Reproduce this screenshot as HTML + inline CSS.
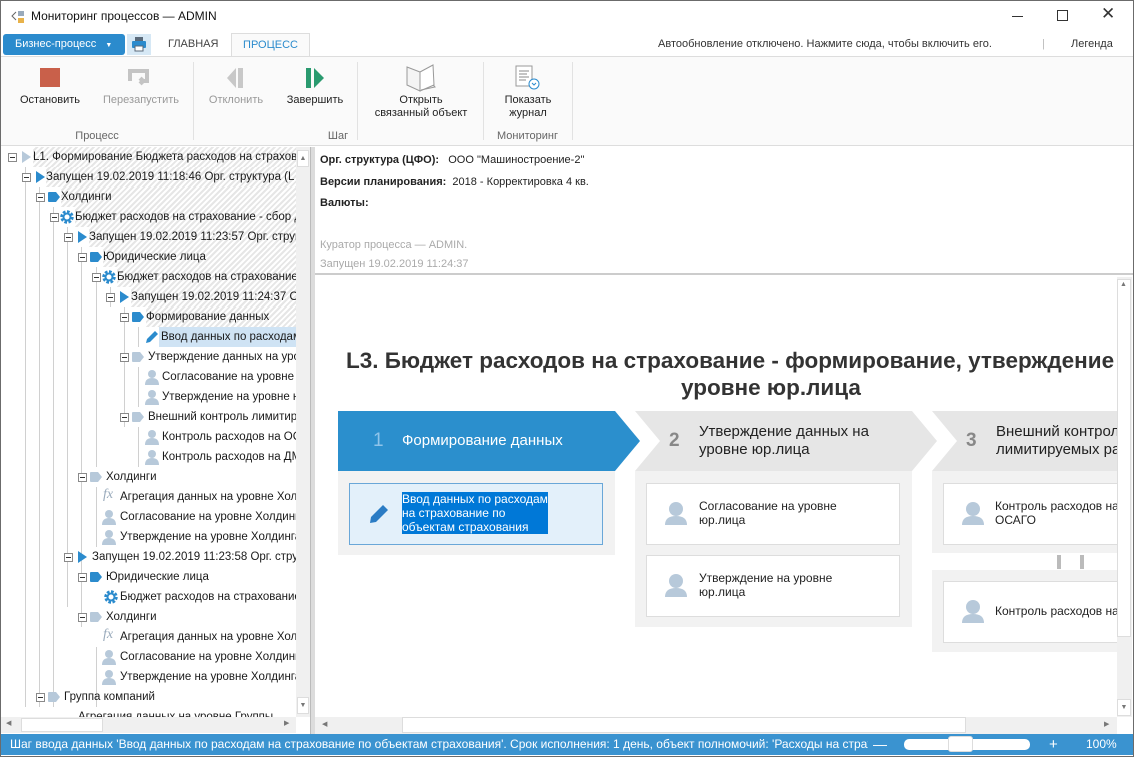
<!DOCTYPE html>
<html><head><meta charset="utf-8"><style>
*{box-sizing:border-box;margin:0;padding:0}
body{width:1134px;height:757px;overflow:hidden;background:#fff;font-family:"Liberation Sans",sans-serif;font-size:11px;color:#222;position:relative}
.a{position:absolute}
.win{position:absolute;left:0;top:0;width:1134px;height:757px;border:1px solid #6b6b6b}
.r{position:absolute;height:20px;line-height:20px;white-space:nowrap;font-size:11.5px;color:#1a1a1a}
.ex{position:absolute;width:9px;height:9px;border:1px solid #8a8a8a;background:#fff}
.ex:after{content:"";position:absolute;left:1px;top:3px;width:5px;height:1px;background:#333}
.hat{background:repeating-linear-gradient(135deg,#fff 0 2px,#e6e6e6 2px 4px)}
.lbl{position:absolute;text-align:center;font-size:11px;color:#222;line-height:13px}
.gl{position:absolute;font-size:11px;color:#666;text-align:center}
.sep{position:absolute;top:62px;width:1px;height:78px;background:#e2e2e2}
.card{position:absolute;background:#fff;border:1px solid #ddd;font-size:12px;line-height:14px;color:#111}
.vl{position:absolute;width:1px;background:#d0d0d0}
</style></head><body>
<div class="win"></div>
<svg class="a" style="left:10px;top:9px" width="16" height="16"><path d="M6 3 L2 7 L6 11" stroke="#666" fill="none"/><rect x="8" y="2" width="6" height="5" fill="#9ab"/><rect x="8" y="9" width="6" height="5" fill="#e8b24a"/></svg>
<div class="a" style="left:31px;top:9px;font-size:12px;color:#111">Мониторинг процессов — ADMIN</div>
<div class="a" style="left:1012px;top:16px;width:11px;height:1px;background:#333"></div>
<div class="a" style="left:1057px;top:10px;width:11px;height:11px;border:1px solid #333"></div>
<div class="a" style="left:1101px;top:4px;font-size:17px;color:#333">✕</div>
<div class="a" style="left:3px;top:34px;width:122px;height:21px;background:#2b8bcd;border-radius:3px;color:#fff;font-size:11px;line-height:21px;padding-left:12px">Бизнес-процесс&nbsp;&nbsp;&nbsp;<span style="font-size:7px">▼</span></div>
<div class="a" style="left:127px;top:34px;width:24px;height:21px;background:#d6e8f5"></div>
<svg class="a" style="left:131px;top:36px" width="16" height="16"><rect x="4" y="1" width="8" height="4" fill="#5a6a7a"/><rect x="1" y="5" width="14" height="7" rx="1" fill="#2b8bcd"/><rect x="4" y="10" width="8" height="5" fill="#fff" stroke="#5a6a7a"/></svg>
<div class="a" style="left:168px;top:38px;font-size:11px;color:#444">ГЛАВНАЯ</div>
<div class="a" style="left:231px;top:33px;width:79px;height:24px;background:#fafafa;border:1px solid #ddd;border-bottom:none;color:#2b8bcd;font-size:11px;text-align:center;line-height:22px">ПРОЦЕСС</div>
<div class="a" style="left:658px;top:38px;font-size:11px;color:#333">Автообновление отключено. Нажмите сюда, чтобы включить его.</div>
<div class="a" style="left:1042px;top:38px;color:#bbb">|</div>
<div class="a" style="left:1071px;top:38px;font-size:11px;color:#333">Легенда</div>
<div class="a" style="left:1px;top:56px;width:1132px;height:90px;background:#fafafa;border-top:1px solid #ddd;border-bottom:1px solid #ddd"></div>
<div class="a" style="left:40px;top:68px;width:20px;height:19px;background:#c9604a"></div>
<svg class="a" style="left:126px;top:67px" width="26" height="22"><path d="M4 14 V4 H21 V14 H14 M14 14 L17 11 M14 14 L17 17" stroke="#c4c4c4" stroke-width="4" fill="none"/></svg>
<div class="lbl" style="left:10px;top:94px;width:80px">Остановить</div>
<div class="lbl" style="left:96px;top:94px;width:90px;color:#999">Перезапустить</div>
<svg class="a" style="left:226px;top:67px" width="20" height="22"><path d="M10 1 L1 11 L10 21Z" fill="#c8c8c8"/><rect x="12" y="1" width="5" height="20" fill="#c8c8c8"/></svg>
<svg class="a" style="left:306px;top:67px" width="20" height="22"><rect x="0" y="1" width="5" height="20" fill="#2a9a6f"/><path d="M8 1 L18 11 L8 21Z" fill="#2a9a6f"/></svg>
<div class="lbl" style="left:198px;top:94px;width:76px;color:#999">Отклонить</div>
<div class="lbl" style="left:278px;top:94px;width:74px">Завершить</div>
<svg class="a" style="left:404px;top:63px" width="34" height="30"><path d="M3 4 L16 9 L16 28 L3 22Z" fill="#f4f4f4" stroke="#999"/><path d="M16 9 L29 2 L30 22 L16 28Z" fill="#fff" stroke="#999"/><path d="M17 27 L31 24 L29 22" fill="none" stroke="#999"/></svg>
<div class="lbl" style="left:362px;top:94px;width:118px">Открыть<br>связанный объект</div>
<svg class="a" style="left:514px;top:65px" width="28" height="26"><rect x="2" y="1" width="16" height="20" fill="#fff" stroke="#999"/><path d="M5 6h10M5 9h8M5 12h10M5 15h7" stroke="#888"/><circle cx="20" cy="19" r="5" fill="#fff" stroke="#2b8bcd"/><path d="M18 18 L20 20 L22 18" stroke="#2b8bcd" fill="none"/></svg>
<div class="lbl" style="left:488px;top:94px;width:80px">Показать<br>журнал</div>
<div class="sep" style="left:193px"></div><div class="sep" style="left:357px"></div><div class="sep" style="left:483px"></div><div class="sep" style="left:572px"></div>
<div class="gl" style="left:1px;top:130px;width:192px">Процесс</div>
<div class="gl" style="left:193px;top:130px;width:290px">Шаг</div>
<div class="gl" style="left:483px;top:130px;width:89px">Мониторинг</div>

<div class="a" style="left:1px;top:147px;width:310px;height:587px;background:#fff"></div>
<div class="a" style="left:310px;top:147px;width:5px;height:588px;background:#dcdcdc;border-left:1px solid #bbb"></div>
<div class="a" style="left:1px;top:147px;width:295px;height:570px;overflow:hidden">
<div class="vl" style="left:24px;top:20px;height:540px"></div>
<div class="vl" style="left:38px;top:40px;height:520px"></div>
<div class="vl" style="left:52px;top:60px;height:500px"></div>
<div class="vl" style="left:66px;top:80px;height:380px"></div>
<div class="vl" style="left:80px;top:100px;height:360px"></div>
<div class="vl" style="left:95px;top:120px;height:200px"></div>
<div class="vl" style="left:109px;top:140px;height:20px"></div>
<div class="vl" style="left:123px;top:160px;height:120px"></div>
<div class="vl" style="left:137px;top:180px;height:20px"></div>
<div class="vl" style="left:137px;top:220px;height:40px"></div>
<div class="vl" style="left:137px;top:280px;height:40px"></div>
<div class="vl" style="left:95px;top:340px;height:60px"></div>
<div class="vl" style="left:80px;top:420px;height:60px"></div>
<div class="vl" style="left:95px;top:500px;height:60px"></div>
</div>
<div class="a" style="left:1px;top:147px;width:295px;height:570px;overflow:hidden">
<div class="r hat" style="left:32px;top:0;width:270px">L1. Формирование Бюджета расходов на страхование</div>
<div class="ex" style="left:7px;top:6px"></div><svg class="a" style="left:19px;top:3px" width="12" height="14"><path d="M2 1 L11 7 L2 13Z" fill="#b7c9da"/></svg>
<div class="r hat" style="left:45px;top:20px;width:260px">Запущен 19.02.2019 11:18:46 Орг. структура (L</div>
<div class="ex" style="left:21px;top:26px"></div><svg class="a" style="left:33px;top:23px" width="12" height="14"><path d="M2 1 L11 7 L2 13Z" fill="#2b8bcd"/></svg>
<div class="r hat" style="left:60px;top:40px;width:250px">Холдинги</div>
<div class="ex" style="left:35px;top:46px"></div><svg class="a" style="left:47px;top:45px" width="13" height="10"><path d="M0 1 Q0 0 1 0 H8 L12 5 L8 10 H1 Q0 10 0 9Z" fill="#2b8bcd"/></svg>
<div class="r hat" style="left:74px;top:60px;width:230px">Бюджет расходов на страхование - сбор д</div>
<div class="ex" style="left:49px;top:66px"></div><svg class="a" style="left:58px;top:62px" width="16" height="16"><circle cx="8" cy="8" r="5" fill="none" stroke="#2b8bcd" stroke-width="3.5" stroke-dasharray="2.5 1.4"/><circle cx="8" cy="8" r="3.5" fill="none" stroke="#2b8bcd" stroke-width="2"/></svg>
<div class="r hat" style="left:88px;top:80px;width:220px">Запущен 19.02.2019 11:23:57 Орг. структ</div>
<div class="ex" style="left:63px;top:86px"></div><svg class="a" style="left:75px;top:83px" width="12" height="14"><path d="M2 1 L11 7 L2 13Z" fill="#2b8bcd"/></svg>
<div class="r hat" style="left:102px;top:100px;width:200px">Юридические лица</div>
<div class="ex" style="left:77px;top:106px"></div><svg class="a" style="left:89px;top:105px" width="13" height="10"><path d="M0 1 Q0 0 1 0 H8 L12 5 L8 10 H1 Q0 10 0 9Z" fill="#2b8bcd"/></svg>
<div class="r hat" style="left:116px;top:120px;width:190px">Бюджет расходов на страхование</div>
<div class="ex" style="left:91px;top:126px"></div><svg class="a" style="left:100px;top:122px" width="16" height="16"><circle cx="8" cy="8" r="5" fill="none" stroke="#2b8bcd" stroke-width="3.5" stroke-dasharray="2.5 1.4"/><circle cx="8" cy="8" r="3.5" fill="none" stroke="#2b8bcd" stroke-width="2"/></svg>
<div class="r hat" style="left:130px;top:140px;width:170px">Запущен 19.02.2019 11:24:37 О</div>
<div class="ex" style="left:105px;top:146px"></div><svg class="a" style="left:117px;top:143px" width="12" height="14"><path d="M2 1 L11 7 L2 13Z" fill="#2b8bcd"/></svg>
<div class="r hat" style="left:145px;top:160px;width:160px">Формирование данных</div>
<div class="ex" style="left:119px;top:166px"></div><svg class="a" style="left:131px;top:165px" width="13" height="10"><path d="M0 1 Q0 0 1 0 H8 L12 5 L8 10 H1 Q0 10 0 9Z" fill="#2b8bcd"/></svg>
<div class="r" style="left:158px;top:180px;width:140px;background:#cfe3f4;padding-left:2px">Ввод данных по расходам</div>
<svg class="a" style="left:143px;top:183px" width="15" height="15"><path d="M2 13 L3 9 L11 1 L14 4 L6 12Z" fill="#2b8bcd"/></svg>
<div class="r" style="left:147px;top:200px">Утверждение данных на уро</div>
<div class="ex" style="left:119px;top:206px"></div><svg class="a" style="left:131px;top:205px" width="13" height="10"><path d="M0 1 Q0 0 1 0 H8 L12 5 L8 10 H1 Q0 10 0 9Z" fill="#b7c9da"/></svg>
<div class="r" style="left:161px;top:220px">Согласование на уровне ю</div>
<svg class="a" style="left:144px;top:222px" width="14" height="16"><circle cx="7" cy="5" r="4" fill="#b7c9da"/><path d="M0 16 Q0 9 7 9 Q14 9 14 16Z" fill="#b7c9da"/></svg>
<div class="r" style="left:161px;top:240px">Утверждение на уровне ю</div>
<svg class="a" style="left:144px;top:242px" width="14" height="16"><circle cx="7" cy="5" r="4" fill="#b7c9da"/><path d="M0 16 Q0 9 7 9 Q14 9 14 16Z" fill="#b7c9da"/></svg>
<div class="r" style="left:147px;top:260px">Внешний контроль лимитиру</div>
<div class="ex" style="left:119px;top:266px"></div><svg class="a" style="left:131px;top:265px" width="13" height="10"><path d="M0 1 Q0 0 1 0 H8 L12 5 L8 10 H1 Q0 10 0 9Z" fill="#b7c9da"/></svg>
<div class="r" style="left:161px;top:280px">Контроль расходов на ОС</div>
<svg class="a" style="left:144px;top:282px" width="14" height="16"><circle cx="7" cy="5" r="4" fill="#b7c9da"/><path d="M0 16 Q0 9 7 9 Q14 9 14 16Z" fill="#b7c9da"/></svg>
<div class="r" style="left:161px;top:300px">Контроль расходов на ДМ</div>
<svg class="a" style="left:144px;top:302px" width="14" height="16"><circle cx="7" cy="5" r="4" fill="#b7c9da"/><path d="M0 16 Q0 9 7 9 Q14 9 14 16Z" fill="#b7c9da"/></svg>
<div class="r" style="left:105px;top:320px">Холдинги</div>
<div class="ex" style="left:77px;top:326px"></div><svg class="a" style="left:89px;top:325px" width="13" height="10"><path d="M0 1 Q0 0 1 0 H8 L12 5 L8 10 H1 Q0 10 0 9Z" fill="#b7c9da"/></svg>
<div class="r" style="left:119px;top:340px">Агрегация данных на уровне Холд</div>
<div class="a" style="left:102px;top:340px;font-family:'Liberation Serif',serif;font-style:italic;color:#9ab;font-size:14px">fx</div>
<div class="r" style="left:119px;top:360px">Согласование на уровне Холдинга</div>
<svg class="a" style="left:101px;top:362px" width="14" height="16"><circle cx="7" cy="5" r="4" fill="#b7c9da"/><path d="M0 16 Q0 9 7 9 Q14 9 14 16Z" fill="#b7c9da"/></svg>
<div class="r" style="left:119px;top:380px">Утверждение на уровне Холдинга</div>
<svg class="a" style="left:101px;top:382px" width="14" height="16"><circle cx="7" cy="5" r="4" fill="#b7c9da"/><path d="M0 16 Q0 9 7 9 Q14 9 14 16Z" fill="#b7c9da"/></svg>
<div class="r" style="left:91px;top:400px">Запущен 19.02.2019 11:23:58 Орг. структ</div>
<div class="ex" style="left:63px;top:406px"></div><svg class="a" style="left:75px;top:403px" width="12" height="14"><path d="M2 1 L11 7 L2 13Z" fill="#2b8bcd"/></svg>
<div class="r" style="left:105px;top:420px">Юридические лица</div>
<div class="ex" style="left:77px;top:426px"></div><svg class="a" style="left:89px;top:425px" width="13" height="10"><path d="M0 1 Q0 0 1 0 H8 L12 5 L8 10 H1 Q0 10 0 9Z" fill="#2b8bcd"/></svg>
<div class="r" style="left:119px;top:440px">Бюджет расходов на страхование</div>
<svg class="a" style="left:102px;top:442px" width="16" height="16"><circle cx="8" cy="8" r="5" fill="none" stroke="#2b8bcd" stroke-width="3.5" stroke-dasharray="2.5 1.4"/><circle cx="8" cy="8" r="3.5" fill="none" stroke="#2b8bcd" stroke-width="2"/></svg>
<div class="r" style="left:105px;top:460px">Холдинги</div>
<div class="ex" style="left:77px;top:466px"></div><svg class="a" style="left:89px;top:465px" width="13" height="10"><path d="M0 1 Q0 0 1 0 H8 L12 5 L8 10 H1 Q0 10 0 9Z" fill="#b7c9da"/></svg>
<div class="r" style="left:119px;top:480px">Агрегация данных на уровне Холд</div>
<div class="a" style="left:102px;top:480px;font-family:'Liberation Serif',serif;font-style:italic;color:#9ab;font-size:14px">fx</div>
<div class="r" style="left:119px;top:500px">Согласование на уровне Холдинга</div>
<svg class="a" style="left:101px;top:502px" width="14" height="16"><circle cx="7" cy="5" r="4" fill="#b7c9da"/><path d="M0 16 Q0 9 7 9 Q14 9 14 16Z" fill="#b7c9da"/></svg>
<div class="r" style="left:119px;top:520px">Утверждение на уровне Холдинга</div>
<svg class="a" style="left:101px;top:522px" width="14" height="16"><circle cx="7" cy="5" r="4" fill="#b7c9da"/><path d="M0 16 Q0 9 7 9 Q14 9 14 16Z" fill="#b7c9da"/></svg>
<div class="r" style="left:63px;top:540px">Группа компаний</div>
<div class="ex" style="left:35px;top:546px"></div><svg class="a" style="left:47px;top:545px" width="13" height="10"><path d="M0 1 Q0 0 1 0 H8 L12 5 L8 10 H1 Q0 10 0 9Z" fill="#b7c9da"/></svg>
<div class="r" style="left:77px;top:560px">Агрегация данных на уровне Группы</div>
</div>
<div class="a" style="left:296px;top:147px;width:14px;height:570px;background:#f0f0f0"></div>
<div class="a" style="left:297px;top:150px;width:12px;height:17px;background:#fff;border:1px solid #ddd;font-size:7px;color:#777;text-align:center;line-height:15px">▲</div>
<div class="a" style="left:297px;top:697px;width:12px;height:17px;background:#fff;border:1px solid #ddd;font-size:7px;color:#777;text-align:center;line-height:15px">▼</div>
<div class="a" style="left:1px;top:717px;width:295px;height:16px;background:#f0f0f0"></div>
<div class="a" style="left:21px;top:718px;width:82px;height:14px;background:#fff;border:1px solid #ddd"></div>
<div class="a" style="left:6px;top:719px;font-size:7px;color:#777">◀</div>
<div class="a" style="left:284px;top:719px;font-size:7px;color:#777">▶</div>

<div class="a" style="left:315px;top:147px;width:818px;height:128px;background:#fff;border-bottom:2px solid #ccc"></div>
<div class="a" style="left:320px;top:154px;font-size:11px"><b>Орг. структура (ЦФО):</b>&nbsp;&nbsp;&nbsp;ООО "Машиностроение-2"</div>
<div class="a" style="left:320px;top:176px;font-size:11px"><b>Версии планирования:</b>&nbsp;&nbsp;2018 - Корректировка 4 кв.</div>
<div class="a" style="left:320px;top:197px;font-size:11px"><b>Валюты:</b></div>
<div class="a" style="left:320px;top:239px;font-size:11px;color:#aaa">Куратор процесса — ADMIN.</div>
<div class="a" style="left:320px;top:258px;font-size:11px;color:#aaa">Запущен 19.02.2019 11:24:37</div>

<div class="a" style="left:315px;top:277px;width:802px;height:440px;overflow:hidden;background:#fff">
<div class="a" style="left:31px;top:71px;white-space:nowrap;font-size:22.5px;font-weight:bold;color:#333">L3. Бюджет расходов на страхование - формирование, утверждение данных на</div>
<div class="a" style="left:366px;top:98px;white-space:nowrap;font-size:22.5px;font-weight:bold;color:#333">уровне юр.лица</div>
<svg class="a" style="left:0;top:0" width="802" height="440">
<path d="M23 134 H300 L325 164 L300 194 H23Z" fill="#2b8fcd"/>
<path d="M320 134 H597 L622 164 L597 194 H320 L345 164Z" fill="#e6e6e6"/>
<path d="M617 134 H802 V194 H617 L642 164Z" fill="#e6e6e6"/>
<rect x="23" y="194" width="277" height="84" fill="#f2f2f2"/>
<rect x="320" y="194" width="277" height="156" fill="#f2f2f2"/>
<rect x="617" y="194" width="185" height="82" fill="#f2f2f2"/>
<rect x="617" y="293" width="185" height="82" fill="#f2f2f2"/>
<rect x="742" y="278" width="4" height="14" fill="#bbb"/><rect x="765" y="278" width="4" height="14" fill="#bbb"/>
</svg>
<div class="a" style="left:58px;top:153px;font-size:19px;color:#8fc4ea">1</div>
<div class="a" style="left:87px;top:155px;font-size:15px;color:#fff">Формирование данных</div>
<div class="a" style="left:354px;top:153px;font-size:19px;color:#888;font-weight:bold">2</div>
<div class="a" style="left:384px;top:146px;font-size:15px;color:#222;line-height:18px">Утверждение данных на<br>уровне юр.лица</div>
<div class="a" style="left:651px;top:153px;font-size:19px;color:#888;font-weight:bold">3</div>
<div class="a" style="left:681px;top:146px;font-size:15px;color:#222;line-height:18px;white-space:nowrap">Внешний контроль<br>лимитируемых расходов</div>
<div class="card" style="left:34px;top:206px;width:254px;height:62px;background:#e3f0fa;border-color:#6aa7d8"></div>
<svg class="a" style="left:53px;top:226px" width="22" height="22"><path d="M2 20 L3 14 L15 2 L20 7 L8 19Z" fill="#2b7cc4"/></svg>
<div class="a" style="left:87px;top:215px;width:146px;height:42px;background:#0078d7;color:#fff;font-size:12px;line-height:14px">Ввод данных по расходам<br>на страхование по<br>объектам страхования</div>
<div class="card" style="left:331px;top:206px;width:254px;height:62px"></div>
<div class="card" style="left:331px;top:278px;width:254px;height:62px"></div>
<div class="card" style="left:628px;top:206px;width:190px;height:62px"></div>
<div class="card" style="left:628px;top:304px;width:190px;height:62px"></div>
<svg class="a" style="left:350px;top:224px" width="22" height="24"><circle cx="11" cy="8" r="7" fill="#b7c9da"/><path d="M0 24 Q0 15 11 15 Q22 15 22 24Z" fill="#b7c9da"/></svg>
<svg class="a" style="left:350px;top:296px" width="22" height="24"><circle cx="11" cy="8" r="7" fill="#b7c9da"/><path d="M0 24 Q0 15 11 15 Q22 15 22 24Z" fill="#b7c9da"/></svg>
<svg class="a" style="left:647px;top:224px" width="22" height="24"><circle cx="11" cy="8" r="7" fill="#b7c9da"/><path d="M0 24 Q0 15 11 15 Q22 15 22 24Z" fill="#b7c9da"/></svg>
<svg class="a" style="left:647px;top:322px" width="22" height="24"><circle cx="11" cy="8" r="7" fill="#b7c9da"/><path d="M0 24 Q0 15 11 15 Q22 15 22 24Z" fill="#b7c9da"/></svg>
<div class="a" style="left:384px;top:222px;font-size:12px;line-height:14px">Согласование на уровне<br>юр.лица</div>
<div class="a" style="left:384px;top:294px;font-size:12px;line-height:14px">Утверждение на уровне<br>юр.лица</div>
<div class="a" style="left:680px;top:222px;font-size:12px;line-height:14px;white-space:nowrap">Контроль расходов на<br>ОСАГО</div>
<div class="a" style="left:680px;top:327px;font-size:12px;line-height:14px;white-space:nowrap">Контроль расходов на</div>
</div>
<div class="a" style="left:1117px;top:277px;width:15px;height:440px;background:#f0f0f0"></div>
<div class="a" style="left:1117px;top:279px;width:14px;height:358px;background:#fff;border:1px solid #ddd"></div>
<div class="a" style="left:1120px;top:281px;font-size:7px;color:#777">▲</div>
<div class="a" style="left:1117px;top:699px;width:14px;height:17px;background:#fff;border:1px solid #ddd;font-size:7px;color:#777;text-align:center;line-height:15px">▼</div>
<div class="a" style="left:315px;top:717px;width:802px;height:17px;background:#f0f0f0"></div>
<div class="a" style="left:402px;top:717px;width:564px;height:16px;background:#fff;border:1px solid #ddd"></div>
<div class="a" style="left:322px;top:720px;font-size:7px;color:#777">◀</div>
<div class="a" style="left:1104px;top:720px;font-size:7px;color:#777">▶</div>
<div class="a" style="left:1px;top:734px;width:1132px;height:21px;background:#3a93d0;color:#fff;font-size:12px;line-height:21px;white-space:nowrap;overflow:hidden">
<span style="position:absolute;left:9px;width:858px;overflow:hidden">Шаг ввода данных 'Ввод данных по расходам на страхование по объектам страхования'. Срок исполнения: 1 день, объект полномочий: 'Расходы на страхование'</span>
<span style="position:absolute;left:872px;font-size:14px">—</span>
<span style="position:absolute;left:903px;top:5px;width:126px;height:11px;background:#fff;border-radius:5px"></span>
<span style="position:absolute;left:947px;top:2px;width:25px;height:16px;background:#fff;border-radius:3px;border:1px solid #ddd"></span>
<span style="position:absolute;left:1048px;font-size:15px">+</span>
<span style="position:absolute;left:1085px">100%</span>
</div>
</body></html>
